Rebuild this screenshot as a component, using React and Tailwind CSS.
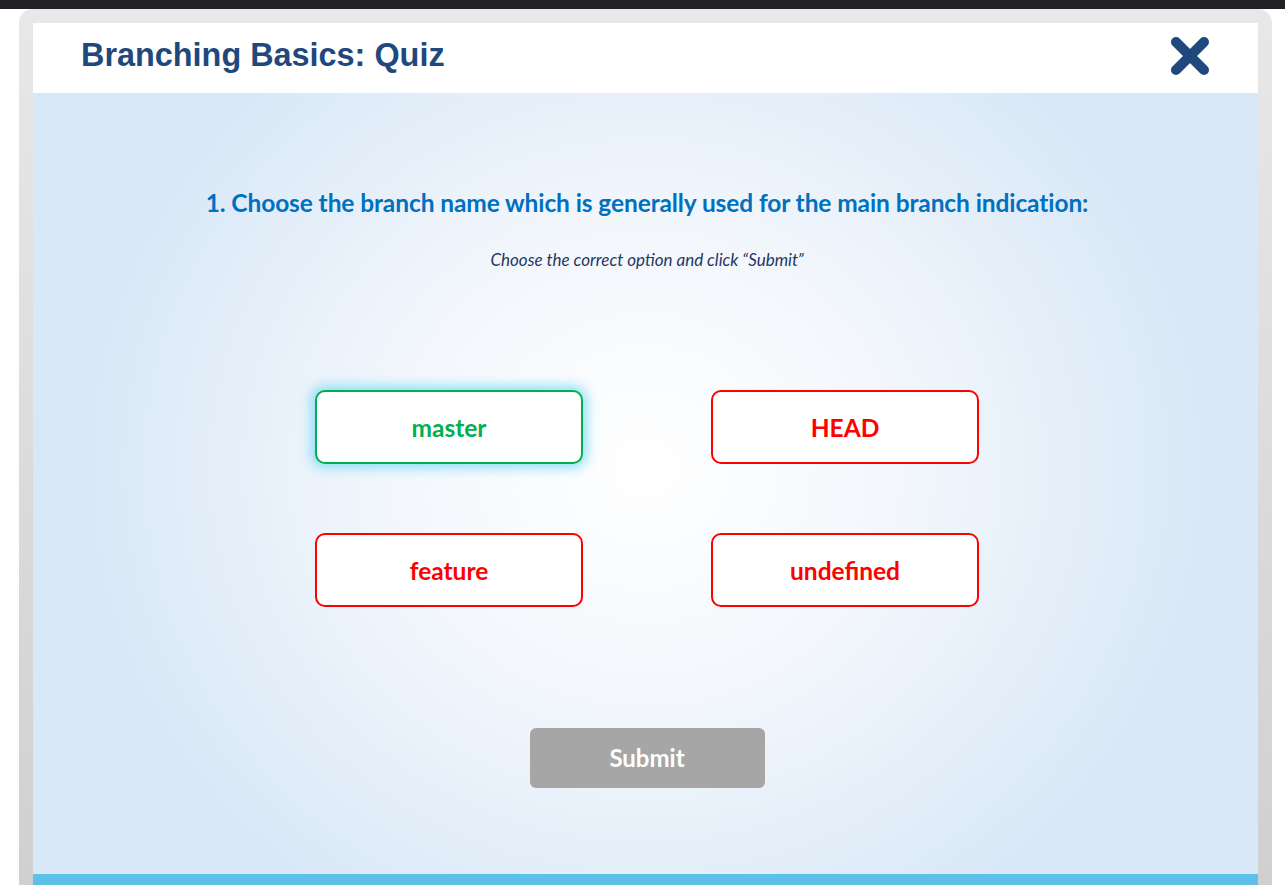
export default function App() {
  const opts = [
    { t: "master", ok: true },
    { t: "HEAD" },
    { t: "feature" },
    { t: "undefined" },
  ];
  return (
    <div className="w-[1285px] h-[885px] overflow-hidden bg-white flex flex-col">
      <div className="h-[9px] bg-[#202124] shrink-0" />
      <div className="ml-[19px] w-[1253px] flex-1 rounded-t-[14px] bg-gradient-to-b from-[#e8e8e8] to-[#d0d0d0] pt-[14px] px-[14px] flex flex-col">
        <div className="h-[70px] bg-white flex items-center justify-between pl-[48px] pr-[46px] shrink-0">
          <h1 className="text-[32.4px] font-bold text-[#1f497d] leading-none mt-[-5px]" style={{ fontFamily: '"Liberation Sans", Arial, sans-serif' }}>
            Branching Basics: Quiz
          </h1>
          <svg width="44" height="44" viewBox="0 0 44 44" className="mt-[-4px]">
            <path d="M8 8 L36 36 M36 8 L8 36" stroke="#1f497d" strokeWidth="10" strokeLinecap="round" />
          </svg>
        </div>
        <div
          className="flex-1 flex flex-col items-center pl-[3px]"
          style={{
            background: "radial-gradient(ellipse 560px 520px at 50% 48%, #ffffff 0%, #f3f7fc 45%, #d9e8f7 100%)",
            fontFamily: 'Lato, "Open Sans", sans-serif',
          }}
        >
          <p className="mt-[92px] text-[24.5px] leading-[1.5] font-bold text-[#0070c0] tracking-[-0.1px]">
            1. Choose the branch name which is generally used for the main branch indication:
          </p>
          <p className="mt-[25px] text-[17px] leading-[1.5] italic text-[#1f3864]">
            Choose the correct option and click “Submit”
          </p>
          <div className="mt-[118px] grid grid-cols-[268px_268px] gap-x-[128px] gap-y-[69px]">
            {opts.map((o) => (
              <div
                key={o.t}
                className={
                  "h-[74px] pt-[3px] rounded-[10px] bg-white flex items-center justify-center text-[24.5px] font-bold border-[2px] " +
                  (o.ok
                    ? "border-[#00b050] text-[#00b050] shadow-[0_0_12px_4px_rgba(110,215,245,0.75)]"
                    : "border-[#ff0000] text-[#ff0000]")
                }
              >
                {o.t}
              </div>
            ))}
          </div>
          <div className="mt-[121px] w-[235px] h-[60px] rounded-[6px] bg-[#a6a6a6] text-white text-[24px] font-bold flex items-center justify-center">
            Submit
          </div>
        </div>
        <div className="h-[11px] bg-[#5cc0e8] shrink-0" />
      </div>
    </div>
  );
}
